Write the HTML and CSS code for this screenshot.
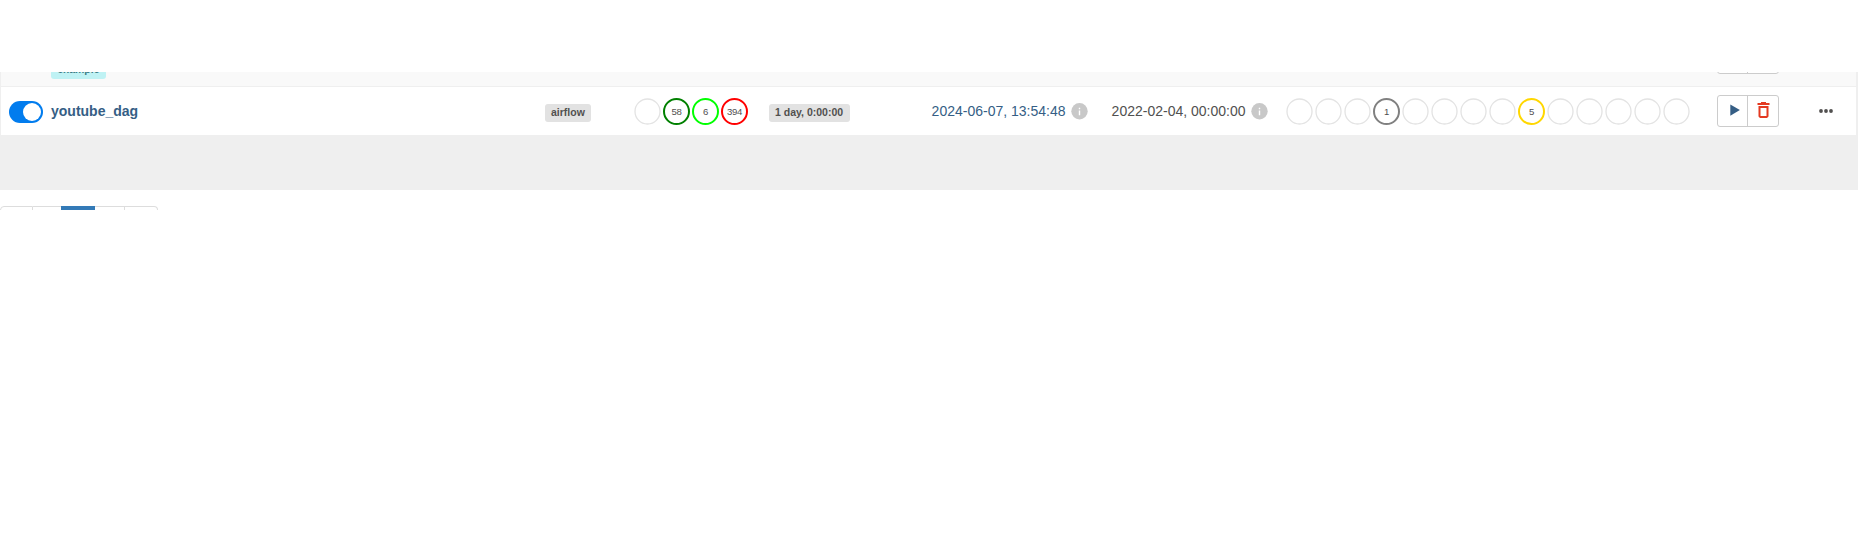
FILE: index.html
```html
<!DOCTYPE html>
<html lang="en">
<head>
<meta charset="utf-8">
<title>DAGs - Airflow</title>
<link rel="stylesheet" href="styles.css">
</head>
<body>
<main class="dags">
  <div class="row row-prev">
    <span class="tag">example</span>
    <div class="btn-group btn-group-prev"><span class="btn"></span><span class="btn"></span></div>
  </div>
  <div class="row row-dag">
    <span class="toggle"><span class="knob"></span></span>
    <a class="dag-name">youtube_dag</a>
    <div class="owner"><span class="label">airflow</span></div>
    <svg class="runs" width="116" height="29">
      <g class="state"><circle cx="14.5" cy="14.5" r="12.5"/></g>
      <g class="state success"><circle cx="43.5" cy="14.5" r="12.5"/><text x="43.5" y="18">58</text></g>
      <g class="state running"><circle cx="72.5" cy="14.5" r="12.5"/><text x="72.5" y="18">6</text></g>
      <g class="state failed"><circle cx="101.5" cy="14.5" r="12.5"/><text x="101.5" y="18">394</text></g>
    </svg>
    <div class="schedule"><span class="label">1 day, 0:00:00</span></div>
    <div class="date last-run"><a>2024-06-07, 13:54:48</a>
      <svg class="info" width="17" height="17" viewBox="0 0 17 17"><circle cx="8.5" cy="8.3" r="8.2"/><path d="M7.8 4.8h1.4v1.4H7.8zM7.8 7.4h1.4v4.8H7.8z"/></svg>
    </div>
    <div class="date"><span>2022-02-04, 00:00:00</span>
      <svg class="info" width="17" height="17" viewBox="0 0 17 17"><circle cx="8.5" cy="8.3" r="8.2"/><path d="M7.8 4.8h1.4v1.4H7.8zM7.8 7.4h1.4v4.8H7.8z"/></svg>
    </div>
    <svg class="tasks" width="406" height="29">
      <g class="state"><circle cx="14.5" cy="14.5" r="12.5"/><circle cx="43.5" cy="14.5" r="12.5"/><circle cx="72.5" cy="14.5" r="12.5"/></g>
      <g class="state queued"><circle cx="101.5" cy="14.5" r="12.5"/><text x="101.5" y="18">1</text></g>
      <g class="state"><circle cx="130.5" cy="14.5" r="12.5"/><circle cx="159.5" cy="14.5" r="12.5"/><circle cx="188.5" cy="14.5" r="12.5"/><circle cx="217.5" cy="14.5" r="12.5"/></g>
      <g class="state retry"><circle cx="246.5" cy="14.5" r="12.5"/><text x="246.5" y="18">5</text></g>
      <g class="state"><circle cx="275.5" cy="14.5" r="12.5"/><circle cx="304.5" cy="14.5" r="12.5"/><circle cx="333.5" cy="14.5" r="12.5"/><circle cx="362.5" cy="14.5" r="12.5"/><circle cx="391.5" cy="14.5" r="12.5"/></g>
    </svg>
    <div class="btn-group">
      <span class="btn"><svg width="30" height="30"><path class="play" d="M12.3 8.4v11.4l9.6-5.7z"/></svg></span>
      <span class="btn"><svg width="30" height="30"><path class="trash" fill-rule="evenodd" d="M13 6h5v1h3.5v2h-12V7H13zM10.500 10h10v10.500l-1.500 1.500h-7L10.500 20.500zM12.500 12v8h6v-8z"/></svg></span>
    </div>
    <svg class="more" width="16" height="6"><circle cx="3" cy="3" r="1.9"/><circle cx="8" cy="3" r="1.9"/><circle cx="13" cy="3" r="1.9"/></svg>
  </div>
</main>
<nav class="pagination">
  <span class="page first"></span><span class="page prev"></span><span class="page active"></span><span class="page next"></span><span class="page last"></span>
</nav>
</body>
</html>
```
FILE: styles.css
```css
* { box-sizing: border-box; }
body {
  margin: 0;
  padding-top: 72px;
  background: #fff;
  color: #51504f;
  font: 14px/20px "Liberation Sans", Arial, sans-serif;
}
svg { display: block; }
.dags {
  width: 1858px;
  height: 118px;
  padding: 0 2px 0 1px;
  background: #efefef;
}
.row { display: grid; }
.row-prev {
  grid-template-columns: 1666px 62px;
  height: 14px;
  padding-left: 50px;
  overflow: hidden;
  background: #f9f9f9;
}
.tag {
  width: 55px;
  height: 18px;
  margin-top: -11px;
  border-radius: 3px;
  background: #bff2f4;
  color: #3c7c85;
  font-size: 10.5px;
  font-weight: bold;
  line-height: 16px;
  text-align: center;
}
.row-dag {
  grid-template-columns: 42px 494px 82px 142px 162px 180px 174px 432px 101px 1fr;
  height: 49px;
  padding-left: 8px;
  border-top: 1px solid #efefef;
  background: #fff;
  align-items: start;
}
.toggle {
  display: flex;
  justify-content: flex-end;
  width: 34px;
  height: 22px;
  margin-top: 14px;
  padding: 2px;
  border-radius: 11px;
  background: #017cee;
}
.knob { width: 18px; height: 18px; border-radius: 50%; background: #fff; }
.dag-name { margin-top: 14px; color: #355e85; font-weight: bold; }
.owner, .schedule { display: flex; margin-top: 17px; }
.label {
  height: 18px;
  padding: 0 6px;
  border-radius: 3px;
  background: #e2e2e2;
  font-size: 10.5px;
  font-weight: bold;
  line-height: 17px;
  white-space: nowrap;
}
.schedule .label { padding-right: 7px; }
.runs, .tasks { margin-top: 10px; }
.runs { margin-left: 6px; }
.state circle { fill: none; stroke: #e3e3e3; stroke-width: 1.3; }
.state text { fill: #51504f; font-size: 9.6px; letter-spacing: -0.3px; text-anchor: middle; }
.success circle { stroke: green; stroke-width: 2; }
.running circle { stroke: lime; stroke-width: 2; }
.failed circle { stroke: red; stroke-width: 2; }
.queued circle { stroke: gray; stroke-width: 2; }
.retry circle { stroke: gold; stroke-width: 2; }
.date { display: flex; gap: 6px; margin: 14px 0 0 0.6px; white-space: nowrap; }
.last-run a { color: #355e85; }
.info { margin-top: 2px; fill: #c8c8c8; }
.info path { fill: #fff; }
.btn-group {
  display: flex;
  width: 62px;
  height: 32px;
  margin-top: 8px;
  border: 1px solid #ccc;
  border-radius: 3px;
  background: #fff;
}
.btn-group-prev { margin-top: -30px; }
.btn { width: 30px; }
.btn:first-child { border-right: 1px solid #ccc; }
.play { fill: #355e85; }
.trash { fill: #e43921; }
.more { margin-top: 21px; fill: #51504f; }
.pagination {
  display: flex;
  width: 158px;
  height: 4px;
  margin-top: 16px;
  overflow: hidden;
}
.page {
  height: 34px;
  border: solid #ddd;
  border-width: 1px 1px 1px 0;
}
.first { width: 33px; border-left-width: 1px; border-radius: 4px 0 0 4px; }
.prev { width: 28px; border-right: 0; }
.active { width: 34px; border: 0; background: #337ab7; }
.next { width: 30px; }
.last { width: 33px; border-radius: 0 4px 4px 0; }
```
